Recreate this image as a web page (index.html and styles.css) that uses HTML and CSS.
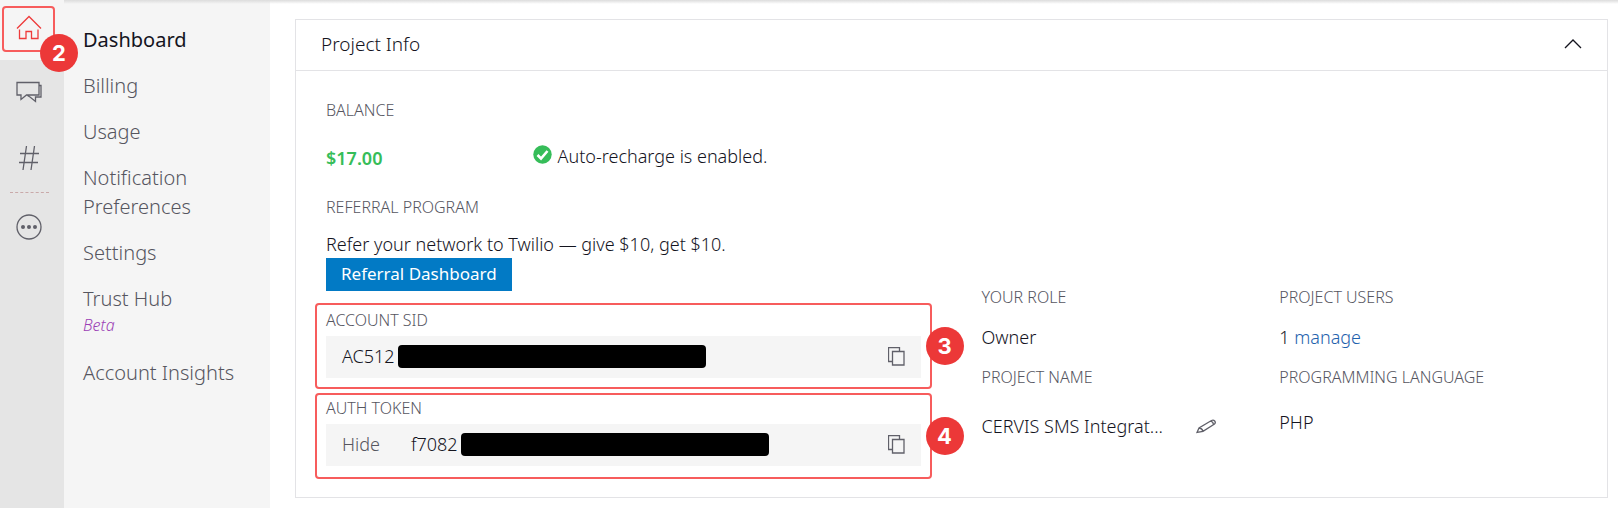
FILE: index.html
```html
<!DOCTYPE html>
<html lang="en">
<head>
<meta charset="utf-8">
<title>Project Info</title>
<link rel="stylesheet" href="styles.css">
</head>
<body>
<div class="app">
  <nav class="rail" aria-label="Products">
    <a class="rail-item rail-home" href="#" aria-label="Home">
      <span class="rail-mark">
        <svg width="26" height="26" viewBox="0 0 26 26"><path d="M1 13.500L13 1.500l12 12M3.500 14.500v9h6.500v-7h5.500v7h6.500v-9"/></svg>
      </span>
      <span class="badge badge-home">2</span>
    </a>
    <a class="rail-item rail-chat" href="#" aria-label="Messaging">
      <svg width="26" height="22" viewBox="0 0 26 22"><path d="M1 1.500h22v12.500H10.500L5 18.500V14H1zM23 4.500h2V16h-5.500v4.500L14 16l-2.500-1.500"/></svg>
    </a>
    <a class="rail-item rail-hash" href="#" aria-label="Phone Numbers">
      <svg width="22" height="26" viewBox="0 0 22 26"><path d="M8.500 1l-3.500 24M16.500 1L13 25M2 8.500h19M1 17.500h19"/></svg>
    </a>
    <hr class="rail-line">
    <a class="rail-item rail-more" href="#" aria-label="All products">
      <svg width="26" height="26" viewBox="0 0 26 26"><circle cx="13" cy="13" r="12"/><g class="dots"><circle cx="7" cy="13" r="2"/><circle cx="13" cy="13" r="2"/><circle cx="19" cy="13" r="2"/></g></svg>
    </a>
  </nav>
  <nav class="side" aria-label="Console">
    <a class="current" href="#">Dashboard</a>
    <a href="#">Billing</a>
    <a href="#">Usage</a>
    <a href="#">Notification Preferences</a>
    <a href="#">Settings</a>
    <a href="#">Trust Hub<em>Beta</em></a>
    <a href="#">Account Insights</a>
  </nav>
  <main class="main">
    <section class="card">
      <header class="card-head">
        <h1>Project Info</h1>
        <button class="icon-button" type="button" aria-label="Collapse">
          <svg width="18" height="10" viewBox="0 0 18 10"><path d="M1 9l8-8 8 8"/></svg>
        </button>
      </header>
      <div class="card-body">
        <div class="account">
          <h2>BALANCE</h2>
          <div class="balance">
            <strong>$17.00</strong>
            <span class="recharge">
              <svg width="19" height="19" viewBox="0 0 19 19"><circle cx="9.500" cy="9.500" r="9.200"/><path d="M4.500 10l3.500 3.500 6.500-7.500"/></svg>
              Auto-recharge is enabled.
            </span>
          </div>
          <h2>REFERRAL PROGRAM</h2>
          <p class="refer">Refer your network to Twilio — give $10, get $10.</p>
          <button class="primary" type="button">Referral Dashboard</button>
          <div class="callout">
            <h2>ACCOUNT SID</h2>
            <div class="field">
              <span class="value">AC512</span><span class="redacted"></span>
              <button class="icon-button copy" type="button" aria-label="Copy account SID">
                <svg width="17" height="19" viewBox="0 0 17 19"><path d="M4.500 14.500h-4V.5h11v4M4.500 4.500h11.500v13.500H4.500z"/></svg>
              </button>
            </div>
            <span class="badge">3</span>
          </div>
          <div class="callout callout-token">
            <h2>AUTH TOKEN</h2>
            <div class="field">
              <button class="hide" type="button">Hide</button>
              <span class="value">f7082</span><span class="redacted"></span>
              <button class="icon-button copy" type="button" aria-label="Copy auth token">
                <svg width="17" height="19" viewBox="0 0 17 19"><path d="M4.500 14.500h-4V.5h11v4M4.500 4.500h11.500v13.500H4.500z"/></svg>
              </button>
            </div>
            <span class="badge">4</span>
          </div>
        </div>
        <dl class="facts">
          <div><dt>YOUR ROLE</dt><dd>Owner</dd></div>
          <div><dt>PROJECT USERS</dt><dd>1 <a href="#">manage</a></dd></div>
          <div><dt>PROJECT NAME</dt><dd class="name"><span>CERVIS SMS Integrat...</span>
            <button class="icon-button" type="button" aria-label="Edit project name">
              <svg width="21" height="15" viewBox="0 0 21 15"><path d="M1 13.500l2-4.500L15.500 1.500c2.500-1.300 5 1.500 3 3.500L7 12.300zM3 9c2 0 3.300 1.200 4 3.300M14.500 2.200c1.500.2 2.700 1.500 3 3.300"/></svg>
            </button></dd></div>
          <div><dt>PROGRAMMING LANGUAGE</dt><dd class="lang">PHP</dd></div>
        </dl>
      </div>
    </section>
  </main>
</div>
</body>
</html>
```
FILE: styles.css
```css
* { box-sizing: border-box; }
body {
  margin: 0;
  background: #fff;
  color: #14141e;
  font-family: "Noto Sans", "Open Sans", sans-serif;
  font-size: 18px;
  font-weight: 300;
  line-height: 28px;
}
h1, h2, p, dl, dd { margin: 0; }
a { color: inherit; text-decoration: none; }
button { font: inherit; color: inherit; border: 0; background: none; padding: 0; cursor: pointer; }
svg { display: block; fill: none; stroke: #606069; stroke-width: 1.3; }

.app { display: flex; min-height: 100vh; position: relative; }
.app::before {
  content: "";
  position: absolute;
  inset: 0 0 auto;
  height: 4px;
  background: linear-gradient(#dcdcdc, rgba(220, 220, 220, 0));
}

.rail { width: 64px; flex: none; background: #e5e5e5; display: flex; flex-direction: column; }
.rail-item { display: flex; justify-content: center; padding-right: 6px; }
.rail-home { position: relative; justify-content: flex-start; height: 60px; padding: 6px 0 0 2px; background: #f5f5f5; }
.rail-mark {
  display: flex; align-items: center; justify-content: center;
  width: 53px; height: 46px;
  padding-bottom: 2px;
  border: 2px solid #f75c5c; border-radius: 4px;
}
.rail-mark svg { stroke: #ee3b3b; }
.rail-chat { padding-top: 21px; }
.rail-hash { padding-top: 42px; }
.rail-line { width: 39px; margin: 21px 0 0 10px; border: 0; border-top: 1px dashed #c9a9a9; }
.rail-more { padding-top: 21px; }
.rail .dots { fill: #606069; stroke: none; }

.badge {
  position: absolute;
  display: flex; align-items: center; justify-content: center;
  width: 38px; height: 38px;
  border-radius: 50%;
  background: #ec3838;
  color: #fff;
  font: 700 22px/38px Inter, sans-serif;
}
.badge-home { left: 40px; top: 34px; z-index: 1; }

.side {
  width: 206px; flex: none;
  display: flex; flex-direction: column; gap: 17px;
  padding: 25px 19px 24px;
  background: #f5f5f5;
  color: #56565f;
  font-size: 20px;
  line-height: 29px;
}
.side .current { color: #14141e; font-weight: 400; }
.side em { display: block; padding-bottom: 4px; color: #9b3fb5; font-size: 16px; line-height: 24px; }

.main { flex: 1; min-width: 0; padding: 19px 10px 10px 25px; }
.card { border: 1px solid #e3e3e6; }
.card-head {
  display: flex; align-items: center; justify-content: space-between;
  height: 51px; padding: 0 25px 2px;
  border-bottom: 1px solid #e3e3e6;
}
h1 { font-size: 19px; font-weight: inherit; }
.card-head svg { stroke: #14141e; }
.card-body { display: grid; grid-template-columns: 1fr 1fr; gap: 60px; padding: 27px 30px 18px; }

h2, dt { color: #56565f; font-size: 16px; font-weight: inherit; line-height: 24px; }
.account { min-width: 0; }
.balance { display: grid; grid-template-columns: 1fr 2fr; gap: 12px; padding: 20px 0 23px; }
.balance strong { padding-top: 2px; color: #36bd59; font-weight: 600; }
.recharge { display: flex; align-items: start; gap: 6px; }
.recharge svg { margin-top: 3px; fill: #36bd59; stroke: none; }
.recharge path { fill: none; stroke: #fff; stroke-width: 2.6; }
.refer { padding-top: 11px; }
.primary { display: block; padding: 2px 15px 3px; background: #027ac5; color: #fff; font-weight: 400; font-size: 17px; }

.callout {
  position: relative;
  margin: 4px -10px 0 -11px;
  padding: 3px 9px 9px;
  border: 2px solid #f75c5c; border-radius: 4px;
}
.primary + .callout { margin-top: 12px; }
.callout-token { padding-top: 1px; padding-bottom: 11px; }
.callout .badge { right: -34px; top: 22px; }
.field { display: flex; align-items: center; height: 42px; margin-top: 4px; padding: 0 16px 2px; background: #f5f5f5; }
.hide { margin-right: 31px; color: #56565f; }
.redacted { width: 308px; height: 23px; margin-left: 3px; border-radius: 4px; background: #000; }
.copy { margin-left: auto; }

.facts { display: grid; grid-template-columns: 1fr 1fr; align-content: end; align-self: end; padding-bottom: 29px; }
.facts dd { padding: 14px 0; }
.facts a { color: #1f62ad; }
.facts .name { display: flex; align-items: center; gap: 33px; padding: 23px 0 0; }
.facts .lang { padding-top: 19px; }
```
